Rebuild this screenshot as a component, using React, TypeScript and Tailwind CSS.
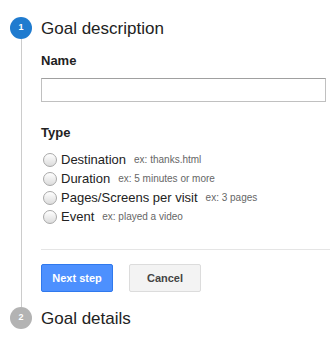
const types = [
  { label: "Destination", hint: "ex: thanks.html" },
  { label: "Duration", hint: "ex: 5 minutes or more" },
  { label: "Pages/Screens per visit", hint: "ex: 3 pages" },
  { label: "Event", hint: "ex: played a video" },
];

function StepBadge({ n, active }: { n: number; active?: boolean }) {
  return (
    <div
      className={
        active
          ? "flex h-[22px] w-[22px] items-center justify-center rounded-full bg-[#1f7bcf] text-[9px] font-bold text-white"
          : "flex h-[22px] w-[22px] items-center justify-center rounded-full bg-[#b3b3b3] text-[9px] font-bold text-white"
      }
    >
      {n}
    </div>
  );
}

export default function App() {
  return (
    <div className="h-[341px] w-[330px] overflow-hidden bg-white pl-[10px] pt-[17px] font-['Liberation_Sans',Arial,sans-serif] text-[#222]">
      <div className="flex h-[22px] items-center">
        <StepBadge n={1} active />
        <div className="ml-[9px] text-[17px] leading-none">Goal description</div>
      </div>

      <div className="ml-[11px] h-[268px] border-l border-[#cccccc] pl-[19px]">
        <div className="pt-[14px] text-[13px] font-bold leading-[16px]">Name</div>
        <input className="mt-[9px] block h-[24px] w-[285px] border border-[#c0c0c0] border-t-[#a0a0a0] bg-white px-2 text-[13px] outline-none" />

        <div className="mt-[23px] text-[13px] font-bold leading-[16px]">Type</div>
        <div className="mt-[9px] flex flex-col">
          {types.map((t) => (
            <label key={t.label} className="flex h-[19px] items-center">
              <span className="ml-[2px] h-[14px] w-[14px] rounded-full border border-[#a8a8a8] bg-gradient-to-b from-white to-[#dcdcdc]" />
              <span className="ml-[4px] text-[13px]">{t.label}</span>
              <span className="ml-[8px] text-[10px] text-[#666]">{t.hint}</span>
            </label>
          ))}
        </div>

        <div className="mt-[23px] h-px bg-[#e5e5e5]" />

        <div className="mt-[14px] flex gap-[16px]">
          <button className="h-[28px] w-[72px] rounded-[2px] border border-[#3079ed] bg-[#4d90fe] text-[11px] font-bold text-white">
            Next step
          </button>
          <button className="h-[28px] w-[72px] rounded-[2px] border border-[#dcdcdc] bg-[#f3f3f3] text-[11px] font-bold text-[#444]">
            Cancel
          </button>
        </div>
      </div>

      <div className="flex h-[22px] items-center">
        <StepBadge n={2} />
        <div className="ml-[9px] text-[17px] leading-none">Goal details</div>
      </div>
    </div>
  );
}
